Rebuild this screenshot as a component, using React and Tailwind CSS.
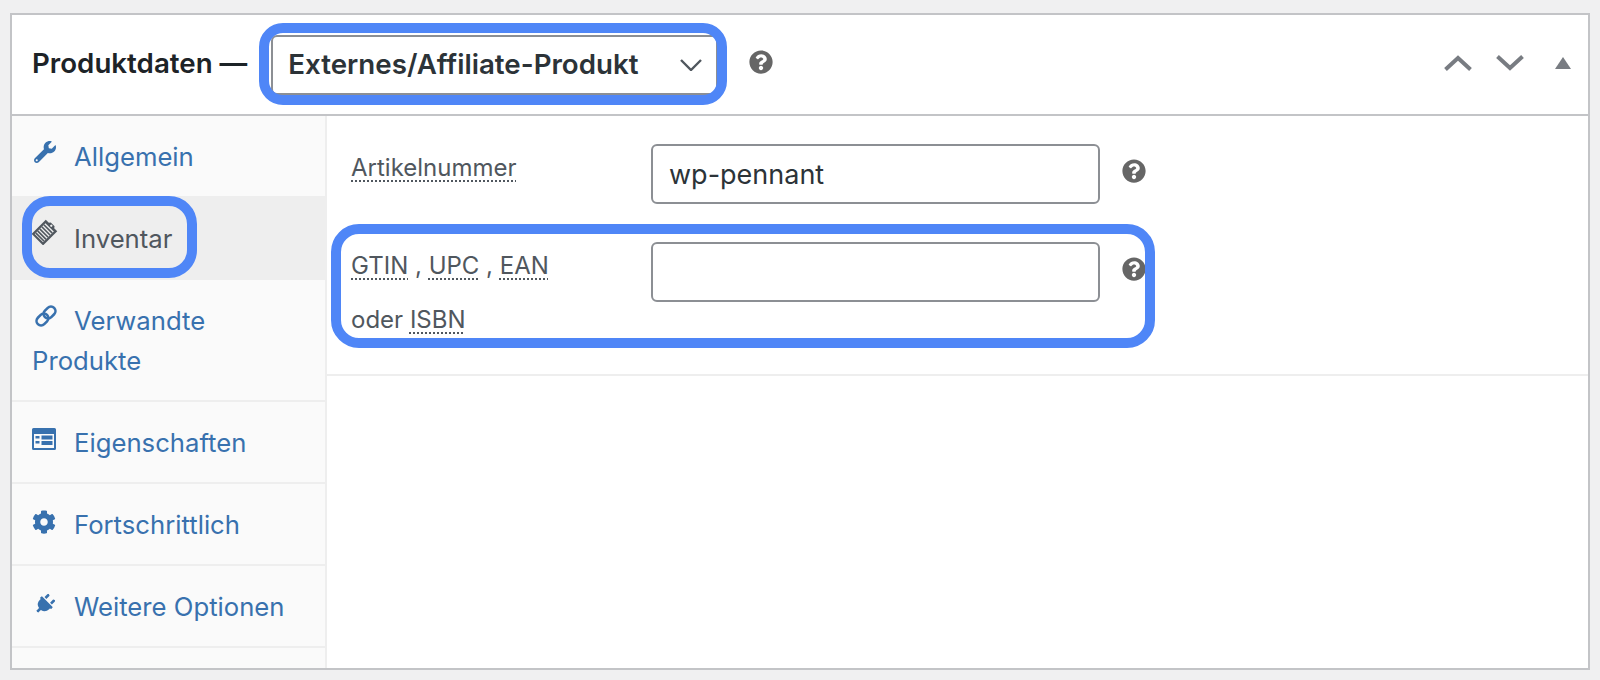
import { FaWrench, FaCog, FaPlug, FaQuestionCircle } from "react-icons/fa";

const InventoryIcon = ({ className }) => (
  <svg viewBox="0 0 24 24" className={className}>
    <g transform="rotate(45 12 12)">
      <path d="M4.5 3.5h4l1-1.5h5l1 1.5h4v18.5h-15z" fill="#50575e" />
      <rect x="6.5" y="6" width="11" height="14" fill="#eeeeee" />
      <path d="M6.5 8h11M6.5 10.7h11M6.5 13.4h11M6.5 16.1h11M6.5 18.6h11" stroke="#50575e" strokeWidth="1.5" />
      <circle cx="12" cy="3.8" r="1.1" fill="#eeeeee" />
    </g>
  </svg>
);

const LinkIcon = ({ className }) => (
  <svg viewBox="0 0 24 24" className={className} fill="none" stroke="#3871ae" strokeWidth="2.6">
    <g transform="rotate(-45 12 12)">
      <rect x="0.5" y="7.5" width="13" height="9" rx="4.5" />
      <rect x="10.500" y="7.500" width="13" height="9" rx="4.500" />
    </g>
  </svg>
);

const AttributesIcon = ({ className }) => (
  <svg viewBox="0 0 24 22" className={className}>
    <path d="M1.5 0h21A1.5 1.5 0 0 1 24 1.5v19a1.5 1.5 0 0 1-1.5 1.5h-21A1.5 1.5 0 0 1 0 20.500v-19A1.500 1.500 0 0 1 1.500 0z" fill="#3871ae" />
    <rect x="2" y="6" width="20" height="14" fill="#fafafa" />
    <path d="M3.500 8h4v2.500h-4zM3.500 13h4v2.500h-4zM9.500 7.500h11v4h-11zM9.500 13h11v4h-11z" fill="#3871ae" />
  </svg>
);

const Help = ({ className }) => <FaQuestionCircle className={`w-6 h-6 text-[#666666] shrink-0 ${className || ""}`} />;

const Hint = ({ children }) => <span className="underline decoration-dotted decoration-2 underline-offset-[4px] decoration-[#50575e]">{children}</span>;

const tabs = [
  { label: "Allgemein", Icon: FaWrench, icon: "w-[22px] h-[22px] ml-[2px]" },
  { label: "Inventar", Icon: InventoryIcon, icon: "w-[26px] h-[26px] -mt-[4px]", active: true },
  { label: "Verwandte Produkte", Icon: LinkIcon, icon: "w-[24px] h-[24px] ml-[2px] -mt-[1px]" },
  { label: "Eigenschaften", Icon: AttributesIcon, icon: "w-6 h-[22px] mt-[1px]" },
  { label: "Fortschrittlich", Icon: FaCog, icon: "w-6 h-6 mt-[1px]" },
  { label: "Weitere Optionen", Icon: FaPlug, icon: "w-[21px] h-[21px] ml-[2px] mt-[3px] rotate-45" },
];

export default function App() {
  return (
    <div className="h-screen bg-[#f0f0f1] pt-[13px] pb-[10px] px-[10px] flex flex-col font-[family-name:Inter,sans-serif] overflow-hidden">
      <div className="flex-1 flex flex-col bg-white border-2 border-[#c3c4c7] min-h-0">

        {/* Header */}
        <div className="h-[101px] shrink-0 flex items-center pl-[20px] border-b-2 border-[#c3c4c7]">
          <h2 className="text-[27.7px] font-semibold text-[#1d2327] whitespace-nowrap -mt-[1px]">Produktdaten —</h2>
          <div className="relative ml-[24px]">
            <div className="w-[447px] h-[60px] flex items-center justify-between pl-[15px] pr-[14px] border-2 border-[#8c8f94] rounded-md bg-white">
              <span className="text-[27.7px] font-semibold text-[#2c3338] whitespace-nowrap">Externes/Affiliate-Produkt</span>
              <svg viewBox="0 0 22 12" className="w-[22px] h-[12px]" fill="none" stroke="#50575e" strokeWidth="2.400">
                <path d="M1 1l10 10L21 1" />
              </svg>
            </div>
            {/* Highlight */}
            <div className="absolute -left-[12px] -top-[12px] w-[468px] h-[82px] border-[10px] border-[#4f86f7] rounded-[24px] pointer-events-none" />
          </div>
          <Help className="ml-[31px] -mt-[6px]" />
          <div className="ml-auto mr-[17px] flex items-center -mt-[3px]">
            <svg viewBox="0 0 28 16" className="w-[28px] h-[16px]" fill="none" stroke="#787c82" strokeWidth="4">
              <path d="M1.500 14.500L14 3l12.500 11.500" />
            </svg>
            <svg viewBox="0 0 28 16" className="w-[28px] h-[16px] ml-[24px]" fill="none" stroke="#787c82" strokeWidth="4">
              <path d="M1.500 1.500L14 13 26.500 1.500" />
            </svg>
            <svg viewBox="0 0 16 12" className="w-[16px] h-[12px] ml-[31px]" fill="#787c82">
              <path d="M8 0l8 12H0z" />
            </svg>
          </div>
        </div>

        <div className="flex-1 flex min-h-0">

          {/* Tabs */}
          <ul className="w-[315px] shrink-0 bg-[#fafafa] border-r-2 border-[#eeeeee]">
            {tabs.map(({ label, Icon, icon, active }) => (
              <li key={label} className={`relative border-b-2 border-[#eeeeee] ${active ? "bg-[#eeeeee] text-[#50575e]" : "text-[#3871ae]"}`}>
                <div className="pl-[20px] pr-[21px] pt-[21px] pb-[19px] text-[25.7px] leading-[40px]">
                  <span className="inline-block w-[42px] h-[26px] align-[-1px]">
                    <Icon className={icon} />
                  </span>
                  {label}
                </div>
                {active && (
                  <div className="absolute left-[10px] -top-[2px] w-[175px] h-[82px] border-[10px] border-[#4f86f7] rounded-[28px] pointer-events-none" />
                )}
              </li>
            ))}
          </ul>

          {/* Panel */}
          <div className="flex-1 min-w-0">
            <div className="pt-[28px] pb-[27px] flex flex-col gap-[38px] border-b-2 border-[#eeeeee] text-[24px] leading-[54px] text-[#50575e]">
              <div className="flex items-start pl-[24px]">
                <div className="w-[300px] shrink-0 -mt-[3px]"><Hint>Artikelnummer</Hint></div>
                <input
                  readOnly
                  value="wp-pennant"
                  className="w-[449px] h-[60px] px-[16px] border-2 border-[#8c8f94] rounded-md bg-white text-[27px] text-[#2c3338] outline-none"
                />
                <Help className="ml-[22px] mt-[15px]" />
              </div>
              <div className="relative flex items-start pl-[24px]">
                <div className="w-[300px] shrink-0 -mt-[3px]">
                  <Hint>GTIN</Hint> , <Hint>UPC</Hint> , <Hint>EAN</Hint>
                  <br />
                  oder <Hint>ISBN</Hint>
                </div>
                <input
                  readOnly
                  value=""
                  className="w-[449px] h-[60px] px-[16px] border-2 border-[#8c8f94] rounded-md bg-white text-[27px] text-[#2c3338] outline-none"
                />
                <Help className="ml-[22px] mt-[15px]" />
                {/* Highlight */}
                <div className="absolute left-[4px] -top-[18px] w-[824px] h-[124px] border-[10px] border-[#4f86f7] rounded-[28px] pointer-events-none" />
              </div>
            </div>
          </div>
        </div>
      </div>
    </div>
  );
}
